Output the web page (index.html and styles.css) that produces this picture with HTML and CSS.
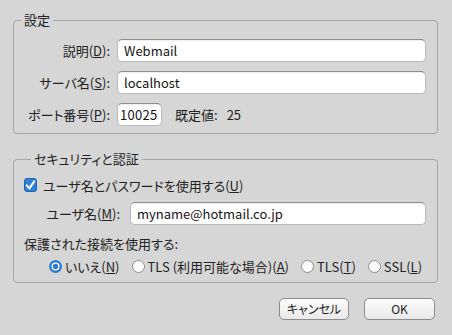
FILE: index.html
```html
<!DOCTYPE html>
<html lang="ja">
<head>
<meta charset="utf-8">
<title>アカウント設定</title>
<link rel="stylesheet" href="styles.css">
</head>
<body>
<div class="dialog">
  <fieldset class="group">
    <legend>設定</legend>
    <div class="form">
      <label class="lbl">説明(<u>D</u>):</label>
      <input class="field" type="text" value="Webmail">
      <label class="lbl">サーバ名(<u>S</u>):</label>
      <input class="field" type="text" value="localhost">
      <label class="lbl">ポート番号(<u>P</u>):</label>
      <div class="port-row">
        <input class="field port" type="text" value="10025">
        <span class="def-lbl">既定値:</span>
        <span class="def-val">25</span>
      </div>
    </div>
  </fieldset>

  <fieldset class="group second">
    <legend>セキュリティと認証</legend>
    <div class="check-row">
      <svg class="checkbox" width="13" height="14" viewBox="0 0 13 14">
        <rect x="0.5" y="0.5" width="12" height="13" rx="2.5" fill="#2f80d6" stroke="#2064b0"/>
        <path d="M2.8 7.4 L5.4 10.4 L10.2 3.4" fill="none" stroke="#fff" stroke-width="2.1" stroke-linecap="round" stroke-linejoin="round"/>
      </svg>
      <span>ユーザ名とパスワードを使用する(<u>U</u>)</span>
    </div>
    <div class="user-row">
      <label class="lbl">ユーザ名(<u>M</u>):</label>
      <input class="field" type="text" value="myname@hotmail.co.jp">
    </div>
    <div class="conn-label">保護された接続を使用する:</div>
    <div class="radios">
      <span class="radio">
        <svg width="13" height="13" viewBox="0 0 13 13">
          <circle cx="6.5" cy="6.5" r="6.5" fill="#2b7bd3"/>
          <circle cx="6.5" cy="6.5" r="4" fill="#fff"/>
          <circle cx="6.5" cy="6.5" r="2.7" fill="#2b7bd3"/>
        </svg>
        <span>いいえ(<u>N</u>)</span>
      </span>
      <span class="radio">
        <svg width="13" height="13" viewBox="0 0 13 13">
          <circle cx="6.5" cy="6.5" r="6" fill="#fdfdfd" stroke="#8e8e8e"/>
        </svg>
        <span>TLS (利用可能な場合)(<u>A</u>)</span>
      </span>
      <span class="radio">
        <svg width="13" height="13" viewBox="0 0 13 13">
          <circle cx="6.5" cy="6.5" r="6" fill="#fdfdfd" stroke="#8e8e8e"/>
        </svg>
        <span>TLS(<u>T</u>)</span>
      </span>
      <span class="radio">
        <svg width="13" height="13" viewBox="0 0 13 13">
          <circle cx="6.5" cy="6.5" r="6" fill="#fdfdfd" stroke="#8e8e8e"/>
        </svg>
        <span>SSL(<u>L</u>)</span>
      </span>
    </div>
  </fieldset>

  <div class="buttons">
    <button class="btn cancel" type="button">キャンセル</button>
    <button class="btn ok" type="button">OK</button>
  </div>
</div>
</body>
</html>
```

FILE: styles.css
```css
html, body {
  margin: 0;
  padding: 0;
  background: #d6d6d6;
}

body {
  font-family: "Noto Sans CJK JP", "Noto Sans", sans-serif;
  font-size: 13px;
  font-feature-settings: "palt";
  color: #222;
  width: 452px;
  height: 335px;
  overflow: hidden;
}

.dialog {
  padding: 12px 14px 0 13px;
}

.group {
  margin: 0;
  padding: 0;
  min-width: 0;
  border: 1px solid #a5a5a5;
  border-radius: 4px;
}

.group legend {
  margin-left: 7px;
  padding: 0 3px;
  line-height: 16px;
  height: 16px;
}

.second {
  margin-top: 17px;
  padding: 0 11px 6px 10px;
}

.form {
  display: grid;
  grid-template-columns: 86px 1fr;
  column-gap: 7px;
  row-gap: 9px;
  padding: 11px 11px 7px 10px;
}

.lbl {
  text-align: right;
  line-height: 23px;
  white-space: nowrap;
}

.field {
  box-sizing: border-box;
  height: 23px;
  margin: 0;
  border: 1px solid #b9b9b9;
  border-top-color: #8f8f8f;
  border-radius: 5px;
  background: #fff;
  padding: 0 6px;
  font: inherit;
  font-feature-settings: "palt";
  color: #141414;
  outline: none;
  box-shadow: inset 0 1px 1px rgba(0, 0, 0, 0.07);
  width: 100%;
}

.port-row {
  display: flex;
  align-items: center;
}

.field.port {
  width: 45px;
  padding: 0 2px;
  letter-spacing: 0.3px;
}

.def-lbl {
  margin-left: 13px;
}

.def-val {
  margin-left: 9px;
}

.check-row {
  display: flex;
  align-items: center;
  height: 20px;
  margin-top: 8px;
  gap: 6px;
}

.check-row .checkbox {
  display: block;
  flex: none;
}

.user-row {
  display: grid;
  grid-template-columns: 96px 1fr;
  column-gap: 10px;
  margin-top: 7px;
}

.conn-label {
  margin-top: 11px;
  line-height: 16px;
}

.radios {
  display: flex;
  align-items: center;
  height: 19px;
  margin-top: 5px;
  padding-left: 25px;
  gap: 12px;
  white-space: nowrap;
}

.radio {
  display: flex;
  align-items: center;
  gap: 3px;
}

.radio svg {
  display: block;
  flex: none;
}

.buttons {
  display: flex;
  justify-content: flex-end;
  gap: 15px;
  margin-top: 15px;
  margin-right: 3px;
}

.btn {
  box-sizing: border-box;
  height: 22px;
  padding: 0;
  margin: 0;
  border: 1px solid #8c8c8c;
  border-radius: 5px;
  background: linear-gradient(#fcfcfc, #e9e9e9);
  font: inherit;
  font-size: 12px;
  font-feature-settings: "palt";
  color: #1c1c1c;
  line-height: 20px;
}

.cancel {
  width: 70px;
}

.ok {
  width: 71px;
}
```
